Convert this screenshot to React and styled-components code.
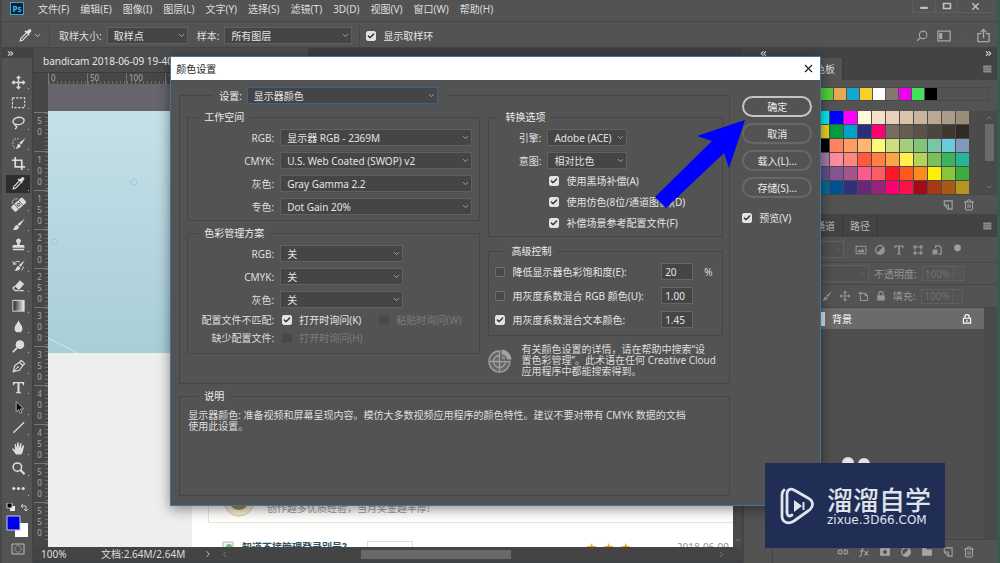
import React, { useState } from "react";
import styled, { createGlobalStyle } from "styled-components";
import {
  Check,
  ChevronDown,
  ChevronLeft,
  ChevronRight,
  ChevronUp,
  ChevronsLeft,
  ChevronsRight,
  Search,
  Trash2,
  X,
} from "lucide-react";

const GlobalStyle = createGlobalStyle`
  * {
    box-sizing: border-box;
  }
  body {
    margin: 0;
    background: #535353;
  }
  body, button, input, select {
    font-family: "Noto Sans", "Noto Sans CJK SC", sans-serif;
    font-size: 10px;
    line-height: 12px;
    color: #dedede;
  }
  button {
    padding: 0;
    border: 0;
    background: none;
  }
  svg {
    display: block;
    flex: none;
  }
`;

const Shell = styled.div`
  position: relative;
  display: flex;
  flex-direction: column;
  min-height: 100vh;
  overflow: hidden;
  background: #535353;
  border-left: 2px solid #484848;
  border-right: 3px solid #3c5a48;
`;

/* ---------- top bars ---------- */

const MenuBar = styled.nav`
  display: flex;
  align-items: center;
  height: 22px;
  padding-left: 8px;
  gap: 11px;
  padding-bottom: 4px;
  border-bottom: 1px solid #464646;
`;

const MenuItem = styled.button`
  white-space: nowrap;
`;

const PsLogo = styled.div`
  width: 14px;
  height: 13px;
  margin-right: 3px;
  border: 1px solid #3aa6d8;
  background: #0a2433;
  color: #4cb9ea;
  font-size: 8px;
  font-weight: 700;
  line-height: 11px;
  text-align: center;
`;

const WindowButtons = styled.div`
  display: flex;
  align-self: flex-start;
  height: 13px;
  margin-left: auto;
  margin-right: 3px;
  border: 1px solid #5e5e5e;
  border-top: 0;
`;

const WindowButton = styled.button`
  display: flex;
  align-items: center;
  justify-content: center;
  width: ${(p) => (p.$wide ? 36 : 22)}px;
  color: #c4c4c4;
  & + & {
    border-left: 1px solid #5e5e5e;
  }
`;

const OptionsBar = styled.div`
  display: flex;
  align-items: center;
  height: 26px;
  padding: 2px 6px 0 16px;
  border-bottom: 1px solid #454545;
`;

const OptionLabel = styled.label`
  margin: 0 5px 0 9px;
  white-space: nowrap;
`;

const OptionDivider = styled.span`
  width: 1px;
  height: 20px;
  margin-left: 7px;
  background: #464646;
`;

const OptionCheck = styled.div`
  margin-left: 6px;
`;

const OptionIcons = styled.div`
  display: flex;
  align-items: center;
  gap: 9px;
  margin-left: auto;
  color: #a8a8a8;
`;

/* ---------- form controls ---------- */

const SelectBox = styled.span`
  position: relative;
  display: block;
  flex: ${(p) => (p.$width ? "none" : "1")};
  width: ${(p) => (p.$width ? `${p.$width}px` : "auto")};
  svg {
    position: absolute;
    right: 2px;
    top: 4px;
    color: ${(p) => (p.$dim ? "#686868" : "#bdbdbd")};
    pointer-events: none;
  }
`;

const Select = styled.select`
  appearance: none;
  display: block;
  width: 100%;
  height: 17px;
  padding: 0 14px 0 6px;
  border: 1px solid ${(p) => (p.$active ? "#3d5f93" : "#606060")};
  border-radius: 0;
  background: ${(p) => (p.$dim ? "#505050" : "#454545")};
  color: #e4e4e4;
  line-height: 14px;
  opacity: 1;
`;

const CheckLabel = styled.label`
  display: flex;
  align-items: center;
  gap: 7px;
  height: 12px;
  white-space: nowrap;
  color: ${(p) => (p.$dim ? "#7b7b7b" : "#e4e4e4")};
`;

const CheckSlot = styled.span`
  position: relative;
  display: flex;
  svg {
    position: absolute;
    left: 1px;
    top: 1px;
    color: #2e2e2e;
    pointer-events: none;
  }
`;

const CheckInput = styled.input`
  appearance: none;
  width: 10px;
  height: 10px;
  margin: 0;
  border: 1px solid #6e6e6e;
  border-radius: 2px;
  background: #484848;
  &:checked {
    border-color: #e2e2e2;
    background: #e2e2e2;
  }
  &:disabled {
    border-color: #4c4c4c;
  }
`;

const NumberInput = styled.input`
  width: 32px;
  height: 17px;
  padding: 0 3px;
  border: 1px solid #666;
  background: #454545;
  color: #e4e4e4;
`;

/* ---------- workspace ---------- */

const Workspace = styled.div`
  display: flex;
  flex: 1;
`;

const Column = styled.div`
  display: flex;
  flex-direction: column;
`;

const ToolBar = styled(Column)`
  width: 32px;
  border-right: 2px solid #434343;
  padding-bottom: 4px;
`;

const DockHandle = styled.div`
  display: flex;
  align-items: center;
  justify-content: ${(p) => p.$align || "flex-start"};
  height: 10px;
  padding: 0 4px;
  background: #434343;
  color: #cfcfcf;
`;

const ToolList = styled(Column)`
  flex: 1;
  align-items: center;
  justify-content: space-between;
  padding: 15px 0 0 2px;
`;

const Tool = styled.button`
  position: relative;
  display: flex;
  align-items: center;
  justify-content: center;
  width: 24px;
  height: 18px;
  background: ${(p) => (p.$active ? "#2e2e2e" : "none")};
  color: #dcdcdc;
  &::after {
    content: "";
    position: absolute;
    right: 1px;
    bottom: 2px;
    width: 1px;
    height: 1px;
    background: #bbb;
  }
`;

const ColorWell = styled(Column)`
  gap: 4px;
  align-items: center;
  padding: 5px 0 4px 2px;
`;

const DocumentArea = styled(Column)`
  flex: 1;
  min-width: 0;
  background: #3c4045;
`;

const DocTab = styled.div`
  width: 274px;
  height: 24px;
  padding: 7px 9px 0;
  background: #4c4c4c;
  color: #e6e6e6;
  white-space: nowrap;
  overflow: hidden;
`;

const RulerTop = styled.div`
  display: flex;
  height: 12px;
  padding-left: 14px;
  background: #474747;
  border-top: 1px solid #3c3c3c;
  overflow: hidden;
`;

const RulerCell = styled.div`
  flex: none;
  width: 39px;
  padding-left: 2px;
  border-left: 1px solid #777;
  background: repeating-linear-gradient(90deg, #6c6c6c 0 1px, transparent 1px 4px) 0 100% / 100% 3px no-repeat;
  color: #a9a9a9;
  font-size: 8px;
  line-height: 10px;
`;

const RulerLeft = styled(Column)`
  width: 14px;
  padding-top: 28px;
  overflow: hidden;
  background: #474747;
  contain: size;
`;

const RulerMark = styled.div`
  display: flex;
  align-items: flex-start;
  flex: none;
  height: 39px;
  padding: 2px 0 0 1px;
  border-top: 1px solid #777;
  background: repeating-linear-gradient(#6c6c6c 0 1px, transparent 1px 4px) 100% 0 / 3px 100% no-repeat;
  color: #a9a9a9;
  font-size: 8px;
  line-height: 9px;
  span {
    writing-mode: vertical-rl;
    text-orientation: upright;
  }
`;

const CanvasRow = styled.div`
  display: flex;
  flex: 1;
`;

const Canvas = styled(Column)`
  flex: 1;
  min-width: 0;
  background: #eee;
`;

const Backdrop = styled.div`
  height: 27px;
  background: #66646d;
`;

const Sky = styled.div`
  height: 242px;
  background: linear-gradient(#c5e0e8, #a9ced8);
`;

const WebPage = styled(Column)`
  flex: 1;
  justify-content: flex-end;
  margin-left: 144px;
  background: #fff;
`;

const PromoCard = styled.div`
  display: flex;
  align-items: flex-end;
  gap: 12px;
  height: 48px;
  margin-left: 16px;
  padding: 0 0 5px 14px;
  border: 1px solid #e6e8c8;
  border-right: 0;
  color: #999;
`;

const PromoText = styled.span`
  padding-bottom: 3px;
`;

const Question = styled.div`
  display: flex;
  gap: 8px;
  height: 6px;
  margin: 18px 4px 0 30px;
  overflow: hidden;
  color: #8f8f8f;
`;

const QuestionTitle = styled.b`
  color: #33505f;
`;

const QuestionTag = styled.span`
  width: 46px;
  height: 14px;
  margin-left: 12px;
  border: 1px solid #ddd;
`;

const QuestionStars = styled.span`
  display: flex;
  gap: 7px;
  margin-left: auto;
  padding-right: 38px;
  color: #e9a400;
`;

const ScrollColumn = styled(Column)`
  width: ${(p) => p.$width}px;
  align-items: center;
  justify-content: space-between;
  padding: 3px 0;
  background: #4a4a4a;
  color: #8e8e8e;
`;

const ScrollThumb = styled.span`
  width: 9px;
  height: 37px;
  margin: 2px 0 auto;
  background: #6b6b6b;
`;

const StatusBar = styled.div`
  display: flex;
  align-items: center;
  height: 14px;
  padding-left: 7px;
  margin-bottom: 2px;
  background: #444;
  white-space: nowrap;
`;

const Zoom = styled.span`
  width: 30px;
`;

const DocSize = styled.span`
  width: 132px;
  padding-left: 30px;
`;

const ScrollTrack = styled.div`
  display: flex;
  align-items: center;
  flex: 1;
  margin: 0 16px 0 7px;
  color: #8e8e8e;
`;

const ScrollBarThumb = styled.span`
  width: 150px;
  height: 9px;
  margin: 0 auto 0 132px;
  background: #686868;
`;

/* ---------- right dock ---------- */

const IconDock = styled(Column)`
  width: 31px;
  border-left: 2px solid #434343;
  border-right: 1px solid #434343;
`;

const PanelDock = styled(Column)`
  width: 224px;
`;

const PanelTabs = styled.div`
  display: flex;
  align-items: stretch;
  height: ${(p) => p.$height}px;
  padding-right: 5px;
  background: #434343;
  color: #b5b5b5;
  svg {
    margin: auto 0 auto auto;
  }
`;

const PanelTab = styled.button`
  padding: 0 7px;
  border-right: 1px solid #393939;
  background: ${(p) => (p.$active ? "#535353" : "none")};
  color: ${(p) => (p.$active ? "#dedede" : "#b9b9b9")};
`;

const RecentSwatches = styled.div`
  display: flex;
  gap: 1px;
  height: 14px;
  margin: 7px 8px 10px 1px;
  padding-left: 7px;
  border: 1px solid #494949;
`;

const SwatchArea = styled.div`
  display: flex;
  height: 83px;
  padding-left: 1px;
  background: #4b4b4b;
`;

const SwatchGrid = styled.div`
  display: grid;
  grid-template-columns: repeat(14, 13px);
  gap: 1px;
  align-content: start;
  margin-right: auto;
`;

const Swatch = styled.span`
  width: ${(p) => (p.$small ? 12 : 13)}px;
  height: ${(p) => (p.$small ? 12 : 13)}px;
  background: ${(p) => p.$color};
`;

const PanelFooter = styled.div`
  display: flex;
  align-items: center;
  justify-content: flex-end;
  gap: 9px;
  height: ${(p) => p.$height || 20}px;
  padding-right: 22px;
  border-top: 1px solid #464646;
  color: #a6a6a6;
`;

const PanelRow = styled.div`
  display: flex;
  align-items: center;
  gap: ${(p) => p.$gap}px;
  height: ${(p) => p.$height || 23}px;
  padding-left: 1px;
  border-bottom: 1px solid #474747;
  color: #969696;
  white-space: nowrap;
`;

const PercentBox = styled.span`
  display: flex;
  align-items: center;
  color: #666;
  border: 1px solid #5f5f5f;
  input {
    width: 31px;
    height: 13px;
    padding: 0 2px;
    border: 0;
    border-right: 1px solid #5f5f5f;
    background: none;
    color: #707070;
  }
`;

const LayerIcons = styled.div`
  display: flex;
  align-items: center;
  gap: 7px;
  padding-left: 4px;
`;

const LayerList = styled.div`
  display: flex;
  flex: 1;
  background: #4f4f4f;
`;

const Layers = styled(Column)`
  flex: 1;
`;

const LayerRow = styled.div`
  display: flex;
  align-items: center;
  height: 21px;
  padding: 0 11px 0 24px;
  background: #6b6b6b;
  color: #fff;
  svg {
    margin-left: auto;
  }
`;

const LayerThumb = styled.span`
  width: 28px;
  height: 14px;
  margin-right: 7px;
  background: #cfe4ea;
`;

/* ---------- dialog ---------- */

const Dialog = styled.section`
  position: absolute;
  top: 56px;
  left: calc(17% - 1px);
  width: 651px;
  border: 1px solid #3f739e;
  background: #535353;
  box-shadow: 0 3px 12px rgba(0, 0, 0, 0.45);
`;

const TitleBar = styled.header`
  display: flex;
  align-items: center;
  justify-content: space-between;
  height: 23px;
  padding: 0 5px;
  background: #fff;
  color: #1c1c1c;
  button {
    color: #1c1c1c;
  }
`;

const DialogBody = styled.div`
  display: flex;
  gap: 12px;
  padding: 7px 8px 9px;
`;

const DialogMain = styled.div`
  flex: 1;
  min-width: 0;
`;

const Group = styled.fieldset`
  min-width: 0;
  margin: 0 0 ${(p) => p.$after || 0}px;
  padding: ${(p) => p.$pad || "6px 7px 5px 0"};
  border: 1px solid #464646;
`;

const Legend = styled.legend`
  display: flex;
  align-items: center;
  margin-left: 10px;
  padding: 0 6px;
  color: #ececec;
`;

const SettingLegend = styled(Legend)`
  margin-left: 26px;
  padding: 0 8px 0 6px;
  gap: 5px;
`;

const Columns = styled.div`
  display: grid;
  grid-template-columns: 5fr 4fr;
  gap: 8px;
`;

const Stack = styled(Column)`
  gap: ${(p) => p.$gap}px;
  padding-left: ${(p) => p.$indent || 0}px;
`;

const FieldRow = styled.div`
  display: grid;
  grid-template-columns: ${(p) => p.$label || 86}px 1fr;
  gap: 6px;
  align-items: center;
`;

const FieldLabel = styled.label`
  text-align: right;
  white-space: nowrap;
`;

const CheckPair = styled.div`
  display: grid;
  grid-template-columns: 97px 1fr;
  padding-left: 2px;
`;

const AdvancedRow = styled.div`
  display: grid;
  grid-template-columns: 1fr 32px 18px;
  gap: 11px;
  align-items: center;
`;

const Hint = styled.div`
  display: flex;
  gap: 9px;
  align-items: center;
  margin-top: 8px;
  line-height: 11px;
  white-space: nowrap;
`;

const Description = styled(Group)`
  min-height: 105px;
  margin-top: 7px;
  line-height: 11px;
`;

const Actions = styled(Column)`
  width: 70px;
  gap: 6px;
  padding-top: 9px;
`;

const PillButton = styled.button`
  height: 21px;
  border: ${(p) => (p.$primary ? "2px solid #c4c4c4" : "2px solid #686868")};
  border-radius: 11px;
  color: #ececec;
`;

const PreviewSlot = styled.div`
  padding-top: 8px;
`;

/* ---------- overlays ---------- */

const Arrow = styled.svg`
  position: absolute;
  top: 120px;
  left: 651px;
  pointer-events: none;
`;

const Brand = styled.aside`
  position: absolute;
  right: 52px;
  bottom: 15px;
  display: flex;
  align-items: center;
  gap: 12px;
  width: 180px;
  height: 85px;
  padding-left: 14px;
  background: #202e55;
  color: #dfe3ed;
`;

const BrandName = styled.div`
  font-family: "Noto Sans CJK SC", sans-serif;
  font-size: 26px;
  font-weight: 500;
  line-height: 28px;
`;

const BrandUrl = styled.div`
  font-family: "DejaVu Sans", sans-serif;
  font-size: 12px;
  line-height: 14px;
`;

const line = { fill: "none", stroke: "currentColor", strokeWidth: 1.4 };

const Eyedropper = () => (
  <>
    <path d="M10.2 2.8c1-1.6 2.7-2 3.6-1.1s.5 2.6-1.1 3.6l-.9.9.6.7-1.2 1.2-4.3-4.3L8.1 2.6l.7.6z" fill="currentColor" />
    <path d="M8.4 5.8 3 11.2l-.7 2.5 2.5-.7 5.4-5.4" {...line} strokeWidth="1.2" />
  </>
);

const toolShapes = {
  move: <path d="M8 1.5v13M1.5 8h13M6 3.5l2-2 2 2M6 12.5l2 2 2-2M3.5 6l-2 2 2 2M12.5 6l2 2-2 2" {...line} />,
  marquee: <path d="M1.5 3h13v10.5h-13z" {...line} strokeWidth="1.2" strokeDasharray="2.5 1.5" />,
  lasso: <path d="M4.5 10C1 8.500 1.500 4.500 5.500 3s8.700.2 8.500 3.200-4.800 4.800-8 3.800c-2-.7-2.200 1.200-.8 1.600 1.500.5.8 2.200-.9 3.200" {...line} />,
  quick: (
    <>
      <path d="M8 3H5C3 3 2 5 2 8s1 5 3 5h3" {...line} strokeWidth="1" strokeDasharray="1.5 1.2" />
      <path d="M15.500 2 11 9 8.800 7.300zM8.300 8.200l2.100 1.700c0 2.300-2.300 3.500-5.200 3.100 1.600-.8 1.100-4.200 3.100-4.800z" fill="currentColor" />
    </>
  ),
  crop: <path d="M4.5 1v10.500H15M1 4.500h10.500V15" {...line} strokeWidth="1.8" />,
  dropper: <Eyedropper />,
  heal: (
    <>
      <g transform="rotate(-42 8 8)">
        <rect x="0" y="4.500" width="16" height="7.500" rx="1.5" fill="currentColor" />
        <path d="M5 4.500V12M11 4.500V12" stroke="#535353" strokeWidth="0.8" />
        <circle cx="8" cy="8.200" r="1.500" fill="none" stroke="#535353" />
      </g>
      <path d="M1.500 7C.8 3.500 3.500 1.500 7 2" {...line} strokeWidth="1" strokeDasharray="1.5 1" />
    </>
  ),
  brush: <path d="M14.8 1.500 9.200 9.700 6.800 7.800zM6.300 8.500l2.200 1.700c.2 3-2.900 4.200-6.700 3.400 2.100-.9 1.800-4.600 4.500-5.100z" fill="currentColor" />,
  stamp: <path d="M8 1.500a2.700 2.700 0 0 1 1.600 4.800c-.7.600-.6 2 .4 2.200h3c1 0 1.500.600 1.500 3h-13c0-2.400.5-3 1.500-3h3c1-.2 1.100-1.600.4-2.200A2.700 2.700 0 0 1 8 1.500zM2 12.500h12V14H2z" fill="currentColor" />,
  history: (
    <>
      <path d="M14.8 2.500 10.500 9.200 8.300 7.600zM7.800 8.400l2.200 1.700c0 2.700-2.700 3.900-6.300 3.200 1.900-.8 1.700-4.400 4.100-4.900z" fill="currentColor" />
      <path d="M3 6.500C4 3.800 7 3 9.500 4.200M2 3.500l.8 3.300 3.200-.6M13 9c.3 2-.8 3.500-2 4.200" {...line} strokeWidth="1" />
    </>
  ),
  eraser: (
    <>
      <path d="m9.500 2.500 4.500 4-5.500 6.300-4.600-4z" fill="currentColor" />
      <path d="M3.900 8.800 2 11l2.500 2.500H8M9 13.500h4.500" {...line} />
    </>
  ),
  gradient: (
    <>
      <defs>
        <linearGradient id="toolGradient">
          <stop offset="0" stopColor="#222" />
          <stop offset="1" stopColor="#eee" />
        </linearGradient>
      </defs>
      <rect x="2" y="2.5" width="12" height="11.5" fill="url(#toolGradient)" stroke="#ddd" />
    </>
  ),
  blur: <path d="M8 1.500c1.200 3.200 4.200 5.200 4.200 8.500a4.200 4.200 0 0 1-8.400 0c0-3.300 3-5.300 4.200-8.500z" fill="currentColor" />,
  dodge: (
    <>
      <circle cx="9.5" cy="6" r="4.600" fill="currentColor" />
      <path d="M6.5 9.500 2 14" {...line} strokeWidth="1.8" />
    </>
  ),
  pen: (
    <>
      <path d="M2.5 13.500 4 7l5-3.500 3.500 3.500L9 12zM9 3.500l2-2 3.500 3.500-2 2" {...line} strokeWidth="1.3" />
      <path d="m2.500 13.500 4.500-4.500" {...line} strokeWidth="1" />
      <circle cx="7.3" cy="8.700" r="1.100" fill="currentColor" />
    </>
  ),
  type: <path d="M2 2h12v3.500h-1.200c-.2-1.500-.7-2-2-2H9.100v8.600c0 .8.500 1 1.600 1.100V14H5.300v-.8c1.100-.1 1.600-.3 1.600-1.100V3.500H5.200c-1.300 0-1.800.5-2 2H2z" fill="currentColor" />,
  select: <path d="M5.5 1.500v11.200l2.700-2.500 1.600 4 1.800-.8-1.600-3.800h3.500z" fill="#111" stroke="#ccc" strokeWidth="0.800" />,
  line: <path d="M2.5 13.500 14 2.500" {...line} />,
  hand: <path d="M5.2 14.500C4 12 2 10.300 1.200 8.500c.7-1 2-.4 3.200 1.200L3.800 4c.2-1 1.400-1 1.600 0L6.300 7.500 6.500 2.200c.2-1 1.500-1 1.700 0l.3 5.200L9.800 2.800c.3-.9 1.500-.7 1.500.3l-.5 5 1.900-3.300c.6-.7 1.500-.3 1.300.6-.7 3.300-1.300 6.600-3 9.100z" fill="currentColor" />,
  zoom: (
    <>
      <circle cx="6.8" cy="6.500" r="4.500" {...line} strokeWidth="1.6" />
      <path d="m10 9.700 4.500 4.500" {...line} strokeWidth="2.200" />
    </>
  ),
  more: (
    <g fill="currentColor">
      <circle cx="3" cy="8" r="1.7" />
      <circle cx="8" cy="8" r="1.7" />
      <circle cx="13" cy="8" r="1.7" />
    </g>
  ),
};

const Glyph = ({ size = 15, children }) => (
  <svg width={size} height={size} viewBox="0 0 16 16" aria-hidden="true">
    {children}
  </svg>
);

const glyphs = {
  menu: <path d="M2 3.500h13M2 6.500h13M2 9.500h13M2 12.500h13" {...line} strokeWidth="1.600" />,
  image: (
    <>
      <path d="M1.5 3h13v10h-13z" {...line} />
      <path d="M4 11V8.500l2-1.500 2 2 2-3 2 2.500V11z" fill="currentColor" />
    </>
  ),
  adjust: (
    <>
      <circle cx="8" cy="8" r="5.800" {...line} strokeWidth="1.600" />
      <path d="M12 4a5.600 5.600 0 0 1-8 8z" fill="currentColor" />
    </>
  ),
  shape: (
    <>
      <path d="M4 4h8v8H4z" {...line} strokeWidth="1.2" />
      <path d="M2 2h3.500v3.500H2zM10.500 2H14v3.500h-3.500zM2 10.500h3.500V14H2zM10.500 10.500H14V14h-3.500z" fill="currentColor" />
    </>
  ),
  smart: (
    <>
      <path d="M6 6V2.500h5L13.500 5v8.500H10" {...line} strokeWidth="1.600" />
      <path d="M2 7.500h6.500V14H2z" fill="currentColor" />
    </>
  ),
  artboard: <path d="M2 4.500h9l3 3V14H4.500V2M11 4.500v3h3" {...line} />,
  lock: (
    <>
      <path d="M3 7h10v7H3z" fill="currentColor" />
      <path d="M5.3 7V4.500c0-3 5.400-3 5.400 0V7" {...line} strokeWidth="1.600" />
    </>
  ),
  layerLock: <path d="M3.200 7h9.600v6.500H3.200zM5.300 7V4.500c0-3 5.400-3 5.400 0V7M8 9v2.500" {...line} strokeWidth="1.600" />,
  newItem: <path d="M3 2.500h10.500v11H8.500L3 8zM3 8h5.500v5.500" {...line} />,
  workspace: (
    <>
      <path d="M1 2.500h14v11H1z" {...line} />
      <path d="M2.500 4.500H6v7H2.500z" fill="currentColor" />
    </>
  ),
  share: <path d="M5.500 6H2v8.500h12V6h-3.500M8 11V1.500M5 4.500l3-3 3 3" {...line} />,
  link: <path d="M7 5.500H4a2.500 2.500 0 0 0 0 5h3M9 5.500h3a2.500 2.500 0 0 1 0 5H9M5 8h6" {...line} />,
  mask: (
    <>
      <path d="M1.500 3h13v10h-13z" fill="currentColor" />
      <circle cx="8" cy="8" r="2.700" fill="#535353" />
    </>
  ),
  folder: <path d="M1.500 3h5L8 4.500h6.500V13h-13z" fill="currentColor" />,
  fx: <path d="M1.500 14c2 .5 2.500-1 3-3.500l1-5.500C6 2.500 7 1.500 8.500 2M3 6.500h4.500M8.500 7c2-.5 3 6 5.500 5M14 7c-2 0-3.500 5-6 5" {...line} />,
  search: (
    <>
      <circle cx="9.500" cy="6.500" r="5" {...line} />
      <path d="m6 10-4.500 4.500" {...line} strokeWidth="1.800" />
    </>
  ),
};

const recent = ["#b03030", "#e23b3b", "#f7f05a", "#54cf3a", "#e8a852", "#15a7cf", "#f8d02e", "#ffffff", "#837a6c", "#f000f0", "#44e05a", "#000000"];

const swatches = [
  "#ff0000 #ffff00 #00ff00 #00ebeb #0000ff #ff00ff #fff9dc #f8dfca #ead0b9 #dcc4ab #cbb49d #bba794 #aa9b88 #998c79",
  "#e50012 #fff100 #009944 #e8d21c #009d43 #00a2cc #2e2c7c #ff0073 #786c60 #665c50 #5a5147 #4c453c #3e382f #302b25",
  "#ffffff #ddd #888 #000000 #ff8560 #ff9c60 #ffb66e #fff979 #cfdc80 #a6ce79 #80c57b #78c5a7 #6cc8dc #8099b8",
  "#8182b8 #8a77b0 #987cb4 #a7799f #ff8ba0 #ff8580 #ff5a3b #ff7e43 #ffa446 #fff04c #b3d35a #7dbe5c #3cb45c #2ab496",
  "#2299bb #3377aa #4d60a0 #5c5093 #86558f #a5548f #ff5a8c #ff5b62 #ff1725 #ff5a1e #ff8a1c #ffee0a #8ac33c #3bad3d",
  "#006633 #007755 #007788 #006a97 #005294 #32307c #682879 #99227a #ff0073 #ff1049 #a50a17 #a53b15 #a95914 #b5941f",
];

const marks = ["50", "100", "150", "200", "250", "300", "350", "400", "450", "500", "550"];

const menus = ["文件(F)", "编辑(E)", "图像(I)", "图层(L)", "文字(Y)", "选择(S)", "滤镜(T)", "3D(D)", "视图(V)", "窗口(W)", "帮助(H)"];

const workspaces = [
  { id: "ws-rgb", label: "RGB:", value: "显示器 RGB - 2369M" },
  { id: "ws-cmyk", label: "CMYK:", value: "U.S. Web Coated (SWOP) v2" },
  { id: "ws-gray", label: "灰色:", value: "Gray Gamma 2.2" },
  { id: "ws-spot", label: "专色:", value: "Dot Gain 20%" },
];

const policies = [
  { id: "pol-rgb", label: "RGB:" },
  { id: "pol-cmyk", label: "CMYK:" },
  { id: "pol-gray", label: "灰色:" },
];

const Dropdown = ({ id, value, width, label, active, dim }) => (
  <SelectBox $width={width} $dim={dim}>
    <Select id={id} aria-label={label} $active={active} $dim={dim} disabled={dim}>
      <option>{value}</option>
    </Select>
    <ChevronDown size={9} />
  </SelectBox>
);

const CheckField = ({ children, checked = false, dim }) => {
  const [on, setOn] = useState(checked);
  return (
    <CheckLabel $dim={dim}>
      <CheckSlot>
        <CheckInput type="checkbox" checked={on} disabled={dim} onChange={() => setOn(!on)} />
        {on && <Check size={8} strokeWidth={4} />}
      </CheckSlot>
      {children}
    </CheckLabel>
  );
};

const ColorSettings = () => (
  <Dialog role="dialog" aria-label="颜色设置">
    <TitleBar>
      <span>颜色设置</span>
      <button aria-label="关闭">
        <X size={13} strokeWidth={2} />
      </button>
    </TitleBar>
    <DialogBody>
      <DialogMain>
        <Group $pad="7px 6px 6px 7px">
          <SettingLegend>
            <label htmlFor="preset">设置:</label>
            <Dropdown id="preset" value="显示器颜色" width={191} active />
          </SettingLegend>
          <Columns>
            <div>
              <Group $after={6}>
                <Legend>工作空间</Legend>
                <Stack $gap={6}>
                  {workspaces.map((x) => (
                    <FieldRow key={x.id}>
                      <FieldLabel htmlFor={x.id}>{x.label}</FieldLabel>
                      <Dropdown id={x.id} value={x.value} />
                    </FieldRow>
                  ))}
                </Stack>
              </Group>
              <Group $pad="6px 7px 9px 0">
                <Legend>色彩管理方案</Legend>
                <Stack $gap={6}>
                  {policies.map((x) => (
                    <FieldRow key={x.id}>
                      <FieldLabel htmlFor={x.id}>{x.label}</FieldLabel>
                      <Dropdown id={x.id} value="关" width={123} />
                    </FieldRow>
                  ))}
                  <FieldRow>
                    <FieldLabel as="span">配置文件不匹配:</FieldLabel>
                    <CheckPair>
                      <CheckField checked>打开时询问(K)</CheckField>
                      <CheckField dim>粘贴时询问(W)</CheckField>
                    </CheckPair>
                  </FieldRow>
                  <FieldRow>
                    <FieldLabel as="span">缺少配置文件:</FieldLabel>
                    <CheckPair>
                      <CheckField dim>打开时询问(H)</CheckField>
                    </CheckPair>
                  </FieldRow>
                </Stack>
              </Group>
            </div>
            <div>
              <Group $after={8} $pad="6px 7px 7px 0">
                <Legend>转换选项</Legend>
                <Stack $gap={6}>
                  <FieldRow $label={52}>
                    <FieldLabel htmlFor="engine">引擎:</FieldLabel>
                    <Dropdown id="engine" value="Adobe (ACE)" width={80} />
                  </FieldRow>
                  <FieldRow $label={52}>
                    <FieldLabel htmlFor="intent">意图:</FieldLabel>
                    <Dropdown id="intent" value="相对比色" width={80} />
                  </FieldRow>
                  <Stack $gap={9} $indent={60}>
                    <CheckField checked>使用黑场补偿(A)</CheckField>
                    <CheckField checked>使用仿色(8位/通道图像)(D)</CheckField>
                    <CheckField checked>补偿场景参考配置文件(F)</CheckField>
                  </Stack>
                </Stack>
              </Group>
              <Group $pad="6px 0 7px 6px">
                <Legend>高级控制</Legend>
                <Stack $gap={7}>
                  <AdvancedRow>
                    <CheckField>降低显示器色彩饱和度(E):</CheckField>
                    <NumberInput aria-label="饱和度" defaultValue="20" />
                    <span>%</span>
                  </AdvancedRow>
                  <AdvancedRow>
                    <CheckField>用灰度系数混合 RGB 颜色(U):</CheckField>
                    <NumberInput aria-label="RGB 灰度系数" defaultValue="1.00" />
                  </AdvancedRow>
                  <AdvancedRow>
                    <CheckField checked>用灰度系数混合文本颜色:</CheckField>
                    <NumberInput aria-label="文本灰度系数" defaultValue="1.45" />
                  </AdvancedRow>
                </Stack>
              </Group>
              <Hint>
                <svg width="24" height="24" viewBox="0 0 24 24" aria-hidden="true">
                  <g fill="none" stroke="#a0a0a0" strokeWidth="1.300">
                    <circle cx="11.500" cy="12.500" r="10.500" fill="#686868" />
                    <circle cx="11.500" cy="12.500" r="6" />
                    <path d="M11.500 2v21M1 12.500h21" />
                  </g>
                  <path d="M12.500 0.500a11 11 0 0 1 11 11h-11z" fill="#535353" />
                  <path d="M13.500 0.500a10.500 10.500 0 0 1 10 10h-4.500a6 6 0 0 0-5.500-5z" fill="#a2a2a2" />
                  <path d="M13.500 6.500a5 5 0 0 1 4.500 4h-4.500z" fill="#8c8c8c" />
                </svg>
                <span>
                  有关颜色设置的详情，请在帮助中搜索“设
                  <br />
                  置色彩管理”。此术语在任何 Creative Cloud
                  <br />
                  应用程序中都能搜索得到。
                </span>
              </Hint>
            </div>
          </Columns>
        </Group>
        <Description $pad="8px 8px">
          <Legend>说明</Legend>
          显示器颜色: 准备视频和屏幕呈现内容。模仿大多数视频应用程序的颜色特性。建议不要对带有 CMYK 数据的文档
          <br />
          使用此设置。
        </Description>
      </DialogMain>
      <Actions>
        <PillButton $primary>确定</PillButton>
        <PillButton>取消</PillButton>
        <PillButton>载入(L)...</PillButton>
        <PillButton>存储(S)...</PillButton>
        <PreviewSlot>
          <CheckField checked>预览(V)</CheckField>
        </PreviewSlot>
      </Actions>
    </DialogBody>
  </Dialog>
);

const Panels = () => (
  <PanelDock>
    <DockHandle $align="flex-end">
      <ChevronsRight size={9} strokeWidth={3} />
    </DockHandle>
    <PanelTabs $height={22}>
      <PanelTab>颜色</PanelTab>
      <PanelTab $active>色板</PanelTab>
      <Glyph size={10}>{glyphs.menu}</Glyph>
    </PanelTabs>
    <RecentSwatches>
      {recent.map((c) => (
        <Swatch key={c} $color={c} $small />
      ))}
    </RecentSwatches>
    <SwatchArea>
      <SwatchGrid>
        {swatches
          .join(" ")
          .split(" ")
          .map((c, index) => (
            <Swatch key={index} $color={c} />
          ))}
      </SwatchGrid>
      <ScrollColumn $width={16}>
        <ChevronUp size={8} />
        <ScrollThumb />
        <ChevronDown size={8} />
      </ScrollColumn>
    </SwatchArea>
    <PanelFooter>
      <Glyph size={12}>{glyphs.newItem}</Glyph>
      <Trash2 size={12} />
    </PanelFooter>
    <PanelTabs $height={23}>
      <PanelTab $active>图层</PanelTab>
      <PanelTab>通道</PanelTab>
      <PanelTab>路径</PanelTab>
      <Glyph size={10}>{glyphs.menu}</Glyph>
    </PanelTabs>
    <PanelRow $gap={7} $height={26}>
      <Dropdown label="类型" width={70} dim />
      <LayerIcons>
        <Glyph size={12}>{glyphs.image}</Glyph>
        <Glyph size={12}>{glyphs.adjust}</Glyph>
        <Glyph size={12}>{toolShapes.type}</Glyph>
        <Glyph size={12}>{glyphs.shape}</Glyph>
        <Glyph size={12}>{glyphs.smart}</Glyph>
        <Glyph size={12}>
          <circle cx="10" cy="5" r="4.500" fill="#a0a0a0" />
        </Glyph>
      </LayerIcons>
    </PanelRow>
    <PanelRow $gap={5} $height={22}>
      <Dropdown label="混合模式" width={95} dim />
      <label htmlFor="opacity">不透明度:</label>
      <PercentBox>
        <input id="opacity" defaultValue="100%" disabled />
        <ChevronDown size={9} />
      </PercentBox>
    </PanelRow>
    <PanelRow $gap={6}>
      <span>锁定:</span>
      <Glyph size={12}>{glyphs.image}</Glyph>
      <Glyph size={12}>{toolShapes.brush}</Glyph>
      <Glyph size={12}>{toolShapes.move}</Glyph>
      <Glyph size={12}>{glyphs.artboard}</Glyph>
      <Glyph size={12}>{glyphs.lock}</Glyph>
      <label htmlFor="fill">填充:</label>
      <PercentBox>
        <input id="fill" defaultValue="100%" disabled />
        <ChevronDown size={9} />
      </PercentBox>
    </PanelRow>
    <LayerList>
      <Layers>
        <LayerRow>
          <LayerThumb />
          背景
          <Glyph size={12}>{glyphs.layerLock}</Glyph>
        </LayerRow>
      </Layers>
      <ScrollColumn $width={13} />
    </LayerList>
    <PanelFooter $height={24}>
      <Glyph size={12}>{glyphs.link}</Glyph>
      <Glyph size={12}>{glyphs.fx}</Glyph>
      <Glyph size={12}>{glyphs.mask}</Glyph>
      <Glyph size={12}>{glyphs.adjust}</Glyph>
      <Glyph size={12}>{glyphs.folder}</Glyph>
      <Glyph size={12}>{glyphs.newItem}</Glyph>
      <Trash2 size={12} />
    </PanelFooter>
  </PanelDock>
);

const Bubbles = styled.svg`
  position: absolute;
  right: 126px;
  bottom: 96px;
`;

const App = () => {
  const [tool, setTool] = useState("dropper");

  return (
    <Shell>
      <GlobalStyle />
      <MenuBar>
        <PsLogo>Ps</PsLogo>
        {menus.map((x) => (
          <MenuItem key={x}>{x}</MenuItem>
        ))}
        <WindowButtons>
          <WindowButton aria-label="最小化">
            <Glyph size={10}>
              <path d="M2 11h12" {...line} strokeWidth="3.500" />
            </Glyph>
          </WindowButton>
          <WindowButton aria-label="最大化">
            <Glyph size={10}>
              <path d="M2.500 4h11v8h-11z" {...line} strokeWidth="2.500" />
            </Glyph>
          </WindowButton>
          <WindowButton $wide aria-label="关闭">
            <X size={11} strokeWidth={3} />
          </WindowButton>
        </WindowButtons>
      </MenuBar>
      <OptionsBar>
        <Glyph>
          <Eyedropper />
        </Glyph>
        <ChevronDown size={9} />
        <OptionDivider />
        <OptionLabel htmlFor="sample-size">取样大小:</OptionLabel>
        <Dropdown id="sample-size" value="取样点" width={81} />
        <OptionLabel htmlFor="sample">样本:</OptionLabel>
        <Dropdown id="sample" value="所有图层" width={128} />
        <OptionDivider />
        <OptionCheck>
          <CheckField checked>显示取样环</CheckField>
        </OptionCheck>
        <OptionIcons>
          <Glyph size={12}>{glyphs.search}</Glyph>
          <Glyph size={14}>{glyphs.workspace}</Glyph>
          <ChevronDown size={7} color="#666" />
          <Glyph>{glyphs.share}</Glyph>
        </OptionIcons>
      </OptionsBar>
      <Workspace>
        <ToolBar>
          <DockHandle>
            <ChevronsRight size={9} strokeWidth={3} />
          </DockHandle>
          <ToolList>
            {Object.keys(toolShapes).map((name) => (
              <Tool key={name} aria-label={name} $active={name === tool} onClick={() => setTool(name)}>
                <Glyph>{toolShapes[name]}</Glyph>
              </Tool>
            ))}
          </ToolList>
          <ColorWell>
            <svg width="24" height="36" viewBox="0 0 24 36" aria-hidden="true">
              <path d="M4 3h5v5H4z" fill="#eee" />
              <path d="M1 0h5v5H1z" fill="#000" stroke="#ccc" />
              <path d="M15 3h5v4M17 1l-2 2 2 2M18 6l2 2 2-2" fill="none" stroke="#ccc" />
              <path d="M9 20h13v14H9z" fill="#fff" />
              <path d="M1 13h13v14H1z" fill="#0000f0" stroke="#c9c9e8" />
            </svg>
            <svg width="14" height="12" viewBox="0 0 14 12" aria-hidden="true">
              <path d="M1 1h12v10H1z" fill="none" stroke="#bbb" />
              <circle cx="7" cy="6" r="3.200" fill="none" stroke="#bbb" strokeDasharray="1.200 .8" />
            </svg>
          </ColorWell>
        </ToolBar>
        <DocumentArea>
          <DocTab>bandicam 2018-06-09 19-40-</DocTab>
          <RulerTop>
            <RulerCell>0</RulerCell>
            <RulerCell>50</RulerCell>
            <RulerCell>100</RulerCell>
            <RulerCell>150</RulerCell>
          </RulerTop>
          <CanvasRow>
            <RulerLeft>
              {marks.map((m) => (
                <RulerMark key={m}>
                  <span>{m}</span>
                </RulerMark>
              ))}
            </RulerLeft>
            <Canvas>
              <Backdrop />
              <Sky>
                <svg width="122" height="242" viewBox="0 0 122 242" aria-hidden="true">
                  <g fill="none" stroke="#a6c9d3">
                    <circle cx="86" cy="71" r="3" />
                    <circle cx="6" cy="131" r="3" />
                  </g>
                  <path d="M0 227l30 15" stroke="#cfe6ec" />
                </svg>
              </Sky>
              <WebPage>
                <PromoCard>
                  <svg width="32" height="32" viewBox="0 0 32 32" aria-hidden="true">
                    <circle cx="16" cy="16" r="15" fill="#f6ecd4" stroke="#dcc79a" />
                    <ellipse cx="16" cy="17" rx="9" ry="8" fill="#a58a55" />
                  </svg>
                  <PromoText>创作越多优质经验，当月奖金越丰厚!</PromoText>
                </PromoCard>
                <Question>
                  <svg width="12" height="12" viewBox="0 0 12 12" aria-hidden="true">
                    <path d="M1 1h10v10H1z" fill="#eef6ee" stroke="#9fc59f" />
                    <circle cx="7" cy="6" r="3" fill="#7db87d" />
                  </svg>
                  <QuestionTitle>知道不接管理登录别号?</QuestionTitle>
                  <QuestionTag />
                  <QuestionStars>
                    <span>★</span>
                    <span>★</span>
                    <span>★</span>
                  </QuestionStars>
                  <span>2018-06-09</span>
                </Question>
              </WebPage>
            </Canvas>
            <ScrollColumn $width={9}>
              <ChevronUp size={8} />
              <ChevronDown size={8} />
            </ScrollColumn>
          </CanvasRow>
          <StatusBar>
            <Zoom>100%</Zoom>
            <DocSize>文档:2.64M/2.64M</DocSize>
            <ChevronRight size={10} />
            <ScrollTrack>
              <ChevronLeft size={9} />
              <ScrollBarThumb />
              <ChevronRight size={9} />
            </ScrollTrack>
          </StatusBar>
        </DocumentArea>
        <IconDock>
          <DockHandle $align="flex-end">
            <ChevronsLeft size={9} strokeWidth={3} />
          </DockHandle>
        </IconDock>
        <Panels />
      </Workspace>
      <ColorSettings />
      <Arrow width="93" height="89" viewBox="0 0 93 89" aria-hidden="true">
        <path d="M92 0 44 16l15 5L2 77l11 11 58-55 5 15z" fill="#00f" />
      </Arrow>
      <Bubbles width="30" height="10" viewBox="0 0 30 10" aria-hidden="true">
        <circle cx="7" cy="6" r="6" fill="#e2e2e2" />
        <circle cx="23" cy="7" r="6" fill="#e2e2e2" />
      </Bubbles>
      <Brand>
        <svg width="36" height="38" viewBox="0 0 36 38" aria-hidden="true">
          <g fill="none" stroke="#dfe3ed" strokeWidth="2.800" strokeLinejoin="round" strokeLinecap="round">
            <path d="M8 25V7c0-4 3-6 7-4l14 8c6 3 6 9 0 13L15 34c-6 4-12 1-12-5V8c0-2 1-4 2-5" />
            <path d="M8 25c0 4 2 5 5 3" />
          </g>
          <path d="M15 13l8 6-8 6z" fill="#dfe3ed" />
          <path d="M24.500 15v8" stroke="#dfe3ed" strokeWidth="2" />
        </svg>
        <div>
          <BrandName>溜溜自学</BrandName>
          <BrandUrl>zixue.3D66.COM</BrandUrl>
        </div>
      </Brand>
    </Shell>
  );
};

export default App;
